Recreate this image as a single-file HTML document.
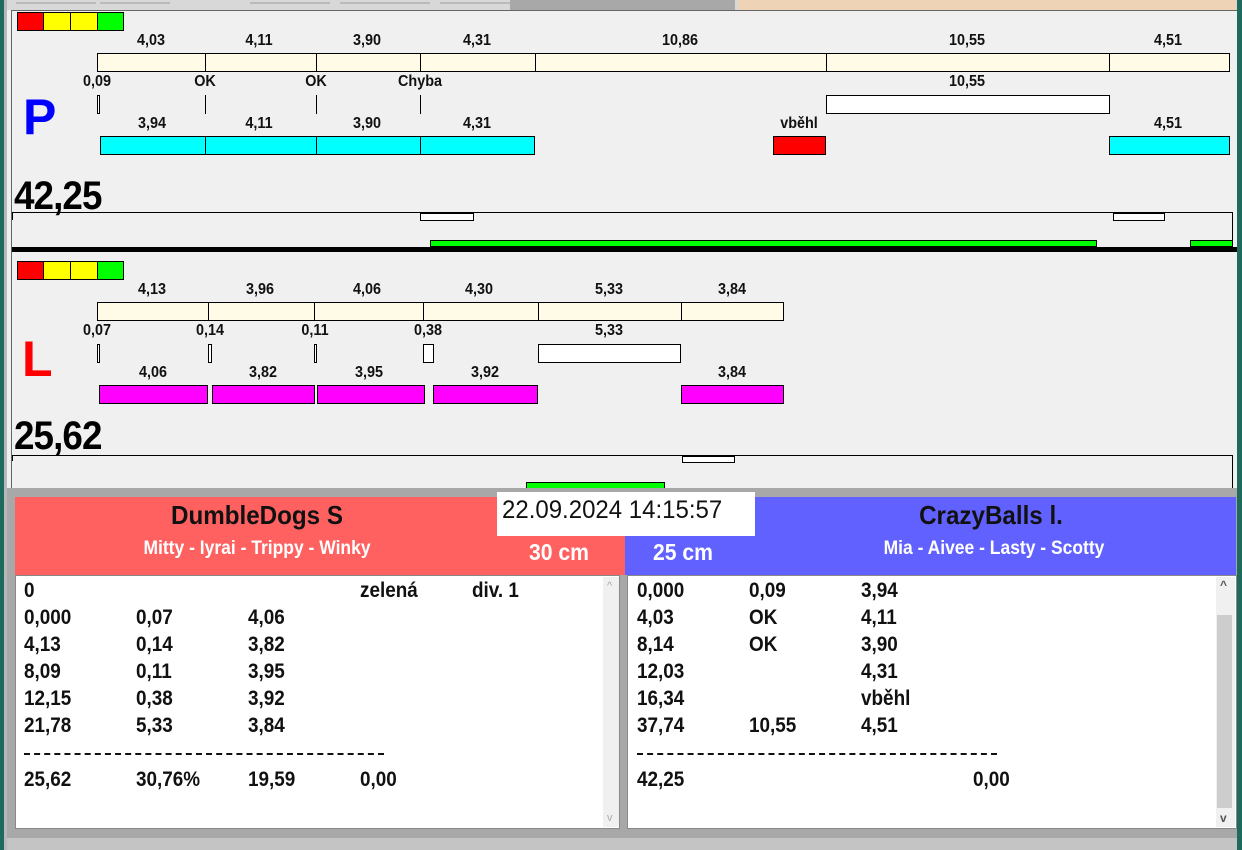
<!DOCTYPE html>
<html><head><meta charset="utf-8"><style>
*{margin:0;padding:0;box-sizing:border-box}
body{width:1242px;height:850px;overflow:hidden;background:#f0f0f0;position:relative;font-family:"Liberation Sans",Arial,sans-serif}
div,span{position:absolute}
.b{border:1px solid #000}
.lb{font-weight:bold;font-size:16px;color:#111;transform:translateX(-50%) scaleX(.9);white-space:nowrap;line-height:15px}
.big{font-weight:bold;font-size:40px;line-height:38px;color:#000;letter-spacing:-1px;transform:scaleX(.92);transform-origin:left top}
.y{background:#fffbe6}
.c{background:#00ffff}
.m{background:#ff00ff}
.w{background:#fff}
.t{font-weight:bold;font-size:21px;line-height:20px;color:#111;white-space:nowrap;transform:scaleX(.9);transform-origin:left top}
</style></head><body>
<!-- top strip -->
<div style="left:0;top:0;width:1242px;height:10px;background:#d8d8d8"></div>
<div style="left:738px;top:0;width:498px;height:11px;background:#efd3b6"></div>
<div style="left:16px;top:2px;width:80px;height:2px;background:#bbb"></div>
<div style="left:100px;top:2px;width:70px;height:2px;background:#bbb"></div>
<div style="left:250px;top:2px;width:80px;height:2px;background:#bbb"></div>
<div style="left:340px;top:2px;width:90px;height:2px;background:#bbb"></div>
<div style="left:440px;top:2px;width:70px;height:2px;background:#bbb"></div>
<div style="left:510px;top:0;width:225px;height:10px;background:#a8a8a8"></div>
<!-- left/right edges -->
<div style="left:0;top:0;width:4px;height:850px;background:#1d6b5c"></div>
<div style="left:4px;top:0;width:3px;height:850px;background:#b8b8b8"></div>
<div style="left:1237px;top:0;width:5px;height:850px;background:#1d6b5c"></div>
<div style="left:11px;top:10px;width:1px;height:478px;background:#666"></div>
<div style="left:11px;top:10px;width:1226px;height:1px;background:#666"></div>

<!-- P panel -->
<div class="b" style="left:17px;top:12px;width:27px;height:19px;background:#f00"></div>
<div class="b" style="left:43px;top:12px;width:28px;height:19px;background:#ff0"></div>
<div class="b" style="left:70px;top:12px;width:28px;height:19px;background:#ff0"></div>
<div class="b" style="left:97px;top:12px;width:27px;height:19px;background:#0f0"></div>

<span class="lb" style="left:151px;top:33px">4,03</span>
<span class="lb" style="left:259px;top:33px">4,11</span>
<span class="lb" style="left:367px;top:33px">3,90</span>
<span class="lb" style="left:477px;top:33px">4,31</span>
<span class="lb" style="left:680px;top:33px">10,86</span>
<span class="lb" style="left:967px;top:33px">10,55</span>
<span class="lb" style="left:1168px;top:33px">4,51</span>
<div class="b y" style="left:97px;top:53px;width:109px;height:19px"></div>
<div class="b y" style="left:205px;top:53px;width:112px;height:19px"></div>
<div class="b y" style="left:316px;top:53px;width:105px;height:19px"></div>
<div class="b y" style="left:420px;top:53px;width:116px;height:19px"></div>
<div class="b y" style="left:535px;top:53px;width:292px;height:19px"></div>
<div class="b y" style="left:826px;top:53px;width:284px;height:19px"></div>
<div class="b y" style="left:1109px;top:53px;width:121px;height:19px"></div>

<span class="lb" style="left:97px;top:74px">0,09</span>
<span class="lb" style="left:205px;top:74px">OK</span>
<span class="lb" style="left:316px;top:74px">OK</span>
<span class="lb" style="left:420px;top:74px">Chyba</span>
<span class="lb" style="left:967px;top:74px">10,55</span>
<div class="b w" style="left:97px;top:95px;width:3px;height:19px"></div>
<div style="left:205px;top:95px;width:1px;height:19px;background:#000"></div>
<div style="left:316px;top:95px;width:1px;height:19px;background:#000"></div>
<div style="left:420px;top:95px;width:1px;height:19px;background:#000"></div>
<div class="b w" style="left:826px;top:95px;width:284px;height:19px"></div>

<span style="left:23px;top:92px;font-weight:bold;font-size:50px;line-height:50px;color:#0000ff">P</span>

<span class="lb" style="left:152px;top:116px">3,94</span>
<span class="lb" style="left:259px;top:116px">4,11</span>
<span class="lb" style="left:367px;top:116px">3,90</span>
<span class="lb" style="left:477px;top:116px">4,31</span>
<span class="lb" style="left:799px;top:116px">vběhl</span>
<span class="lb" style="left:1168px;top:116px">4,51</span>
<div class="b c" style="left:100px;top:136px;width:106px;height:19px"></div>
<div class="b c" style="left:205px;top:136px;width:112px;height:19px"></div>
<div class="b c" style="left:316px;top:136px;width:105px;height:19px"></div>
<div class="b c" style="left:420px;top:136px;width:115px;height:19px"></div>
<div class="b" style="left:773px;top:136px;width:53px;height:19px;background:#f00"></div>
<div class="b c" style="left:1109px;top:136px;width:121px;height:19px"></div>

<span class="big" style="left:14px;top:177px">42,25</span>
<div style="left:12px;top:212px;width:1221px;height:1px;background:#000"></div>
<div style="left:12px;top:212px;width:1px;height:8px;background:#000"></div>
<div style="left:1232px;top:212px;width:1px;height:36px;background:#000"></div>
<div class="b w" style="left:420px;top:213px;width:54px;height:8px"></div>
<div class="b w" style="left:1113px;top:213px;width:52px;height:8px"></div>
<div class="b" style="left:430px;top:240px;width:667px;height:7px;background:#00ff00"></div>
<div class="b" style="left:1190px;top:240px;width:43px;height:7px;background:#00ff00"></div>
<div style="left:12px;top:247px;width:1225px;height:5px;background:#000"></div>

<!-- L panel -->
<div class="b" style="left:17px;top:261px;width:27px;height:19px;background:#f00"></div>
<div class="b" style="left:43px;top:261px;width:28px;height:19px;background:#ff0"></div>
<div class="b" style="left:70px;top:261px;width:28px;height:19px;background:#ff0"></div>
<div class="b" style="left:97px;top:261px;width:27px;height:19px;background:#0f0"></div>

<span class="lb" style="left:152px;top:282px">4,13</span>
<span class="lb" style="left:260px;top:282px">3,96</span>
<span class="lb" style="left:367px;top:282px">4,06</span>
<span class="lb" style="left:479px;top:282px">4,30</span>
<span class="lb" style="left:609px;top:282px">5,33</span>
<span class="lb" style="left:732px;top:282px">3,84</span>
<div class="b y" style="left:97px;top:302px;width:112px;height:19px"></div>
<div class="b y" style="left:208px;top:302px;width:107px;height:19px"></div>
<div class="b y" style="left:314px;top:302px;width:110px;height:19px"></div>
<div class="b y" style="left:423px;top:302px;width:116px;height:19px"></div>
<div class="b y" style="left:538px;top:302px;width:144px;height:19px"></div>
<div class="b y" style="left:681px;top:302px;width:103px;height:19px"></div>

<span class="lb" style="left:97px;top:323px">0,07</span>
<span class="lb" style="left:210px;top:323px">0,14</span>
<span class="lb" style="left:315px;top:323px">0,11</span>
<span class="lb" style="left:428px;top:323px">0,38</span>
<span class="lb" style="left:609px;top:323px">5,33</span>
<div class="b w" style="left:97px;top:344px;width:3px;height:19px"></div>
<div class="b w" style="left:208px;top:344px;width:4px;height:19px"></div>
<div class="b w" style="left:314px;top:344px;width:3px;height:19px"></div>
<div class="b w" style="left:423px;top:344px;width:11px;height:19px"></div>
<div class="b w" style="left:538px;top:344px;width:143px;height:19px"></div>

<span style="left:22px;top:334px;font-weight:bold;font-size:50px;line-height:50px;color:#ff0000">L</span>

<span class="lb" style="left:153px;top:365px">4,06</span>
<span class="lb" style="left:263px;top:365px">3,82</span>
<span class="lb" style="left:369px;top:365px">3,95</span>
<span class="lb" style="left:485px;top:365px">3,92</span>
<span class="lb" style="left:732px;top:365px">3,84</span>
<div class="b m" style="left:99px;top:385px;width:109px;height:19px"></div>
<div class="b m" style="left:212px;top:385px;width:103px;height:19px"></div>
<div class="b m" style="left:317px;top:385px;width:108px;height:19px"></div>
<div class="b m" style="left:433px;top:385px;width:105px;height:19px"></div>
<div class="b m" style="left:681px;top:385px;width:103px;height:19px"></div>

<span class="big" style="left:14px;top:417px">25,62</span>
<div style="left:12px;top:455px;width:1221px;height:1px;background:#000"></div>
<div style="left:12px;top:455px;width:1px;height:6px;background:#000"></div>
<div style="left:1232px;top:455px;width:1px;height:33px;background:#000"></div>
<div class="b w" style="left:682px;top:456px;width:53px;height:7px"></div>
<div class="b" style="left:526px;top:482px;width:139px;height:7px;background:#00ff00"></div>

<!-- bottom -->
<div style="left:7px;top:488px;width:1230px;height:362px;background:#a8a8a8"></div>
<div style="left:15px;top:497px;width:610px;height:78px;background:#ff6161"></div>
<div style="left:625px;top:497px;width:611px;height:78px;background:#6161ff"></div>
<div style="left:620px;top:536px;width:5px;height:39px;background:#ff6161"></div>
<div style="left:497px;top:492px;width:258px;height:44px;background:#fff"></div>
<span style="left:502px;top:496px;font-size:25px;line-height:28px;color:#111;transform:scaleX(.96);transform-origin:left top">22.09.2024 14:15:57</span>
<span style="left:257px;top:501px;transform:translateX(-50%) scaleX(.93);font-weight:bold;font-size:26px;line-height:28px;color:#111;white-space:nowrap">DumbleDogs S</span>
<span style="left:257px;top:539px;transform:translateX(-50%) scaleX(.92);font-weight:bold;font-size:19px;line-height:20px;color:#fff;white-space:nowrap">Mitty - Iyrai - Trippy - Winky</span>
<span style="left:529px;top:540px;font-weight:bold;font-size:23px;line-height:25px;color:#fff;transform:scaleX(.92);transform-origin:left top">30 cm</span>
<span style="left:991px;top:501px;transform:translateX(-50%) scaleX(.93);font-weight:bold;font-size:26px;line-height:28px;color:#111;white-space:nowrap">CrazyBalls l.</span>
<span style="left:653px;top:540px;font-weight:bold;font-size:23px;line-height:25px;color:#fff;transform:scaleX(.92);transform-origin:left top">25 cm</span>
<span style="left:994px;top:539px;transform:translateX(-50%) scaleX(.92);font-weight:bold;font-size:19px;line-height:20px;color:#fff;white-space:nowrap">Mia - Aivee - Lasty - Scotty</span>

<div style="left:15px;top:575px;width:605px;height:254px;background:#fff;border:1px solid #888"></div>
<div style="left:603px;top:577px;width:16px;height:250px;background:#f0f0f0"></div>
<span style="left:607px;top:580px;font-size:11px;color:#aaa">^</span>
<span style="left:607px;top:812px;font-size:11px;color:#aaa">v</span>
<div style="left:627px;top:575px;width:610px;height:254px;background:#fff;border:1px solid #888"></div>
<div style="left:1216px;top:577px;width:19px;height:250px;background:#f0f0f0"></div>
<div style="left:1217px;top:615px;width:15px;height:193px;background:#cdcdcd"></div>
<span style="left:1220px;top:578px;font-size:12px;font-weight:bold;color:#555">^</span>
<span style="left:1220px;top:811px;font-size:12px;font-weight:bold;color:#555">v</span>
<div style="left:7px;top:838px;width:1230px;height:12px;background:#c4c4c4"></div>

<div class="t" style="left:24px;top:581px">0</div>
<div class="t" style="left:360px;top:581px">zelená</div>
<div class="t" style="left:472px;top:581px">div. 1</div>
<div class="t" style="left:24px;top:608px">0,000</div><div class="t" style="left:136px;top:608px">0,07</div><div class="t" style="left:248px;top:608px">4,06</div>
<div class="t" style="left:24px;top:635px">4,13</div><div class="t" style="left:136px;top:635px">0,14</div><div class="t" style="left:248px;top:635px">3,82</div>
<div class="t" style="left:24px;top:662px">8,09</div><div class="t" style="left:136px;top:662px">0,11</div><div class="t" style="left:248px;top:662px">3,95</div>
<div class="t" style="left:24px;top:689px">12,15</div><div class="t" style="left:136px;top:689px">0,38</div><div class="t" style="left:248px;top:689px">3,92</div>
<div class="t" style="left:24px;top:716px">21,78</div><div class="t" style="left:136px;top:716px">5,33</div><div class="t" style="left:248px;top:716px">3,84</div>
<div style="left:24px;top:753px;width:360px;height:0;border-top:2px dashed #111"></div>
<div class="t" style="left:24px;top:770px">25,62</div><div class="t" style="left:136px;top:770px">30,76%</div><div class="t" style="left:248px;top:770px">19,59</div><div class="t" style="left:360px;top:770px">0,00</div>

<div class="t" style="left:637px;top:581px">0,000</div><div class="t" style="left:749px;top:581px">0,09</div><div class="t" style="left:861px;top:581px">3,94</div>
<div class="t" style="left:637px;top:608px">4,03</div><div class="t" style="left:749px;top:608px">OK</div><div class="t" style="left:861px;top:608px">4,11</div>
<div class="t" style="left:637px;top:635px">8,14</div><div class="t" style="left:749px;top:635px">OK</div><div class="t" style="left:861px;top:635px">3,90</div>
<div class="t" style="left:637px;top:662px">12,03</div><div class="t" style="left:861px;top:662px">4,31</div>
<div class="t" style="left:637px;top:689px">16,34</div><div class="t" style="left:861px;top:689px">vběhl</div>
<div class="t" style="left:637px;top:716px">37,74</div><div class="t" style="left:749px;top:716px">10,55</div><div class="t" style="left:861px;top:716px">4,51</div>
<div style="left:637px;top:753px;width:360px;height:0;border-top:2px dashed #111"></div>
<div class="t" style="left:637px;top:770px">42,25</div><div class="t" style="left:973px;top:770px">0,00</div>
</body></html>
